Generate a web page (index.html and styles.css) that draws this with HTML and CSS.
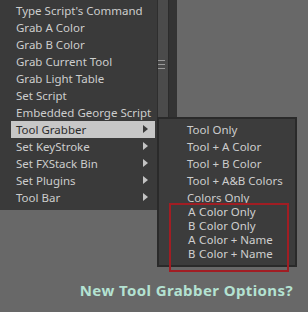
FILE: index.html
```html
<!DOCTYPE html>
<html lang="en">
<head>
	<meta charset="UTF-8">
	<title>Tool Grabber</title>
	<link rel="stylesheet" href="styles.css">
</head>
<body>
<div class="screen">
	<ul class="menu">
		<li>Type Script's Command</li>
		<li>Grab A Color</li>
		<li>Grab B Color</li>
		<li>Grab Current Tool</li>
		<li>Grab Light Table</li>
		<li>Set Script</li>
		<li>Embedded George Script</li>
		<li class="sub active">Tool Grabber</li>
		<li class="sub">Set KeyStroke</li>
		<li class="sub">Set FXStack Bin</li>
		<li class="sub">Set Plugins</li>
		<li class="sub">Tool Bar</li>
	</ul>
	<div class="splitter">
		<div class="track"><span class="grip"></span></div>
		<div class="edge"></div>
	</div>

	<div class="submenu">
		<ul>
			<li>Tool Only</li>
			<li>Tool + A Color</li>
			<li>Tool + B Color</li>
			<li>Tool + A&amp;B Colors</li>
			<li>Colors Only</li>
		</ul>
		<ul class="added">
			<li><span class="small">A Color</span> Only</li>
			<li><span class="small">B Color</span> Only</li>
			<li><span class="small">A Color</span> + Name</li>
			<li><span class="small">B Color</span> + Name</li>
		</ul>
	</div>
	<div class="mark"></div>

	<p class="caption">New Tool Grabber Options?</p>
</div>
</body>
</html>
```
FILE: styles.css
```css
*{
    margin: 0;
    padding: 0;
}

body{
    background: #686868;
}

.screen{
    position: relative;
    width: 308px;
    height: 312px;
    display: flex;
    align-items: flex-start;
    overflow: hidden;
    font-family: "Noto Sans", "Open Sans", sans-serif;
    font-size: 11.5px;
    white-space: nowrap;
}

.menu{
    list-style: none;
    width: 157px;
    padding: 2px 0 4px;
    background: #3a3a3a;
    color: #cdcdcd;
}

.menu li{
    height: 17px;
    line-height: 17px;
    padding-left: 16px;
    margin-right: 2px;
    position: relative;
}

.menu li.active{
    margin-left: 11px;
    padding-left: 5px;
    background: #c7c7c7;
    color: #2c2c2c;
}

.menu li.sub::after{
    content: "";
    position: absolute;
    right: 7px;
    top: 4px;
    border-left: 5px solid #c4c4c4;
    border-top: 4px solid transparent;
    border-bottom: 4px solid transparent;
}

.menu li.active::after{
    border-left-color: #3a3a3a;
}

.splitter{
    display: flex;
    height: 117px;
    width: 19px;
    border-left: 1px solid #2e2e2e;
}

.track{
    width: 10px;
    background: #4b4b4b;
    border-right: 1px solid #2c2c2c;
}

.grip{
    display: block;
    width: 7px;
    height: 7px;
    margin-top: 60px;
    border-top: 1px solid #9a9a9a;
    border-bottom: 1px solid #9a9a9a;
    background: linear-gradient(#9a9a9a, #9a9a9a) 0 3px / 7px 1px no-repeat;
}

.edge{
    width: 8px;
    background: #333;
}

.submenu{
    position: absolute;
    left: 157px;
    top: 117px;
    width: 136px;
    height: 144px;
    padding-top: 2px;
    border: 2px solid #2a2a2a;
    background: #3c3c3c;
    color: #cdcdcd;
}

.submenu ul{
    list-style: none;
    padding-left: 28px;
}

.submenu li{
    height: 17px;
    line-height: 17px;
}

.submenu .added{
    padding-left: 29px;
    margin-top: -1px;
}

.submenu .added li{
    height: 14px;
    line-height: 14px;
    color: #cfcfcf;
}

.small{
    font-family: "DejaVu Sans", sans-serif;
    font-size: 11px;
}

.mark{
    position: absolute;
    left: 169px;
    top: 203px;
    width: 116px;
    height: 65px;
    border: 2px solid #a11d23;
}

.caption{
    position: absolute;
    right: 15px;
    top: 280px;
    font-family: "Noto Sans", sans-serif;
    font-weight: bold;
    font-size: 15px;
    letter-spacing: 0.4px;
    color: #b4e2d2;
}
```
